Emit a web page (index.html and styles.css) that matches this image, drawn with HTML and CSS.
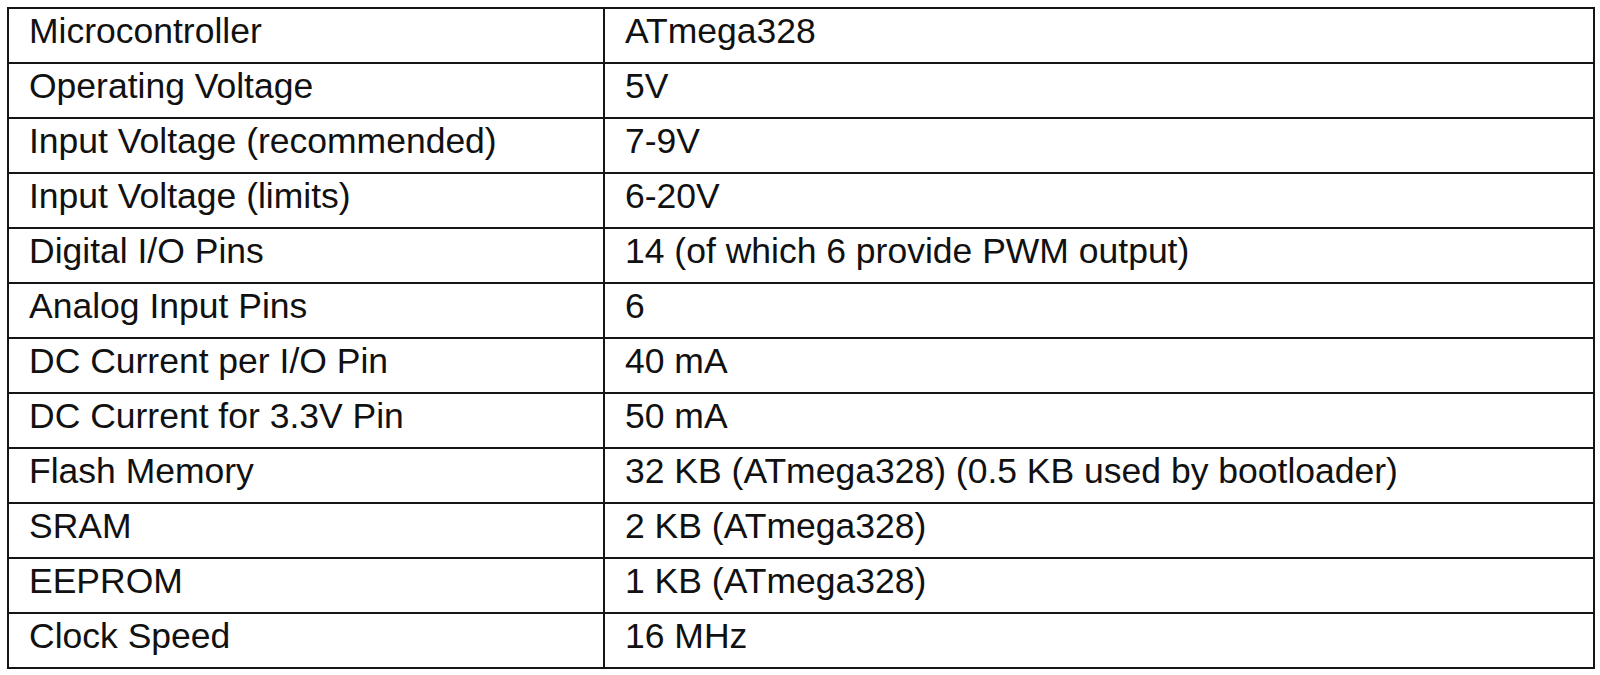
FILE: index.html
```html
<!DOCTYPE html>
<html>
<head>
<meta charset="utf-8">
<link rel="stylesheet" href="styles.css">
</head>
<body>
<div class="page">
<table class="spec">
<tr><td class="k">Microcontroller</td><td class="v">ATmega328</td></tr>
<tr><td class="k">Operating Voltage</td><td class="v">5V</td></tr>
<tr><td class="k">Input Voltage (recommended)</td><td class="v">7-9V</td></tr>
<tr><td class="k">Input Voltage (limits)</td><td class="v">6-20V</td></tr>
<tr><td class="k">Digital I/O Pins</td><td class="v">14 (of which 6 provide PWM output)</td></tr>
<tr><td class="k">Analog Input Pins</td><td class="v">6</td></tr>
<tr><td class="k">DC Current per I/O Pin</td><td class="v">40 mA</td></tr>
<tr><td class="k">DC Current for 3.3V Pin</td><td class="v">50 mA</td></tr>
<tr><td class="k">Flash Memory</td><td class="v">32 KB (ATmega328) (0.5 KB used by bootloader)</td></tr>
<tr><td class="k">SRAM</td><td class="v">2 KB (ATmega328)</td></tr>
<tr><td class="k">EEPROM</td><td class="v">1 KB (ATmega328)</td></tr>
<tr><td class="k">Clock Speed</td><td class="v">16 MHz</td></tr>
</table>
</div>
</body>
</html>
```

FILE: styles.css
```css
html, body {
  margin: 0;
  padding: 0;
  background: #ffffff;
}
.page {
  padding: 7px 0 0 7px;
}
.spec {
  border-collapse: collapse;
  width: 1588px;
  table-layout: fixed;
  font-family: "Liberation Sans", Arial, sans-serif;
  font-size: 35.5px;
  color: #111111;
  border: 2px solid #151515;
}
.spec td {
  border: 2px solid #151515;
  height: 55px;
  box-sizing: border-box;
  padding: 2px 0 0 20px;
  line-height: 41px;
  vertical-align: top;
  white-space: nowrap;
}
.spec td.k {
  width: 596px;
}
```
